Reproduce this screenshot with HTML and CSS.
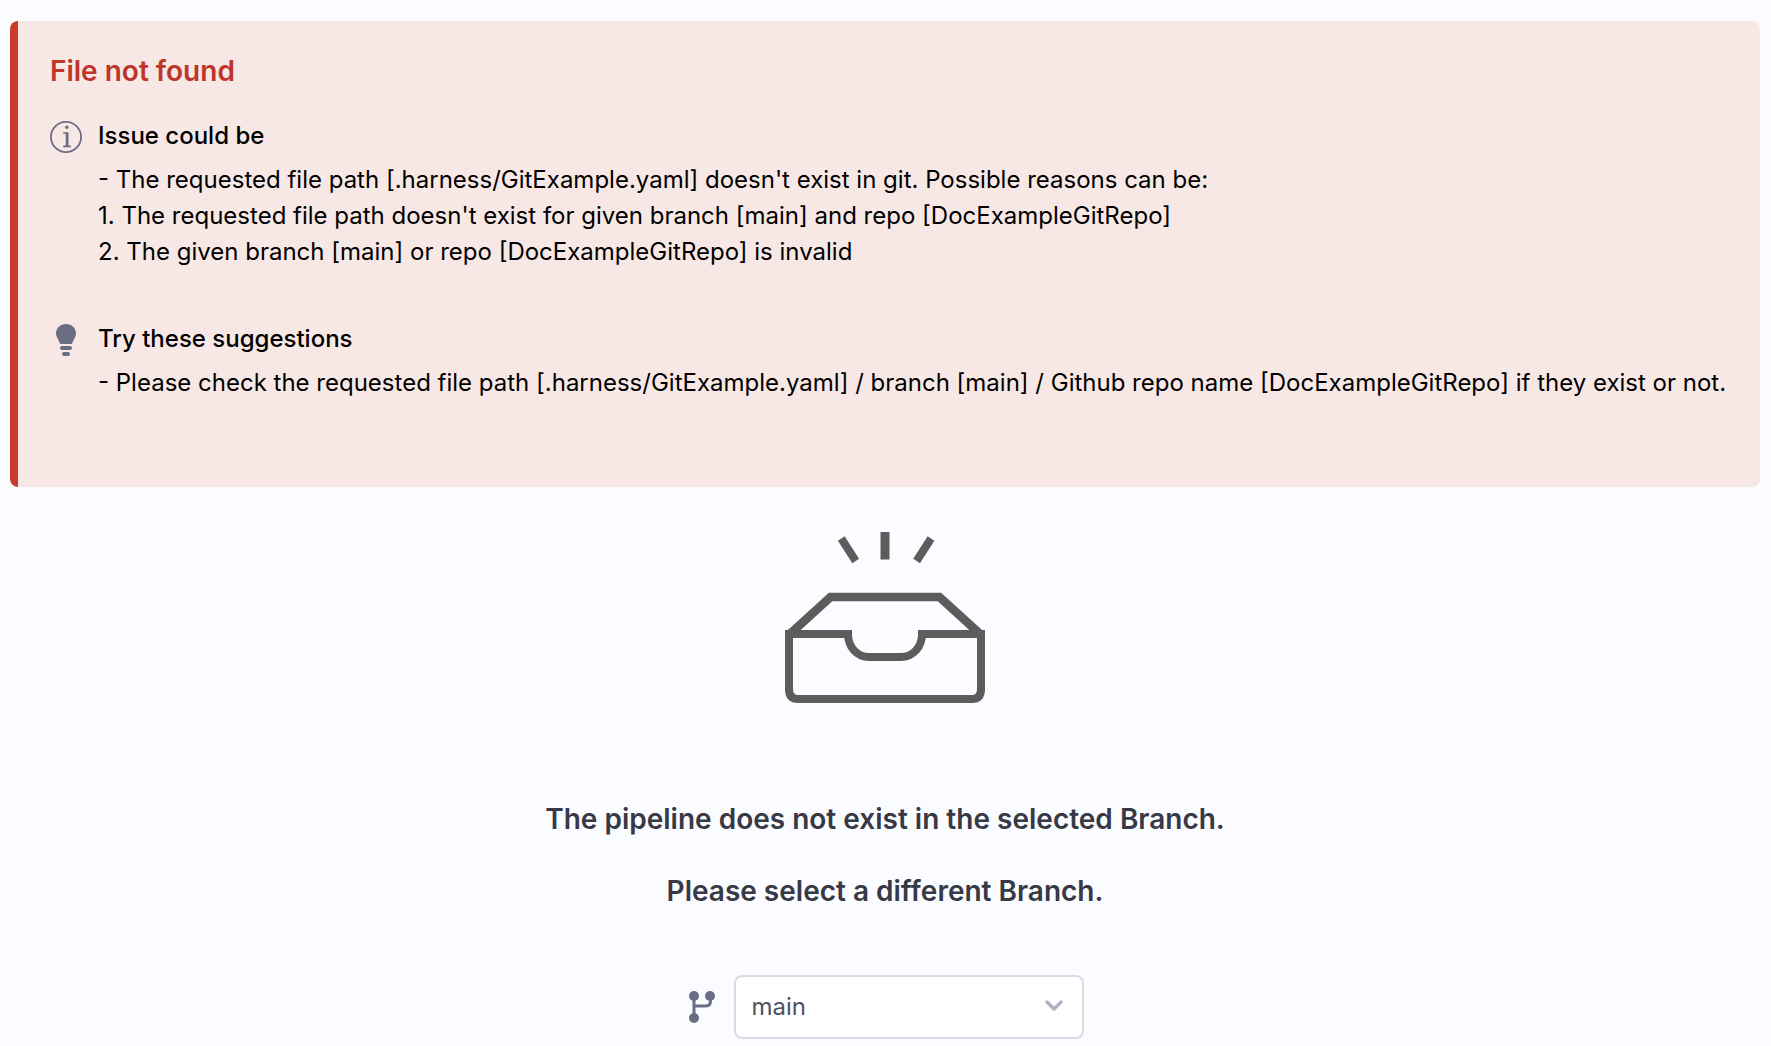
FILE: index.html
```html
<!DOCTYPE html>
<html lang="en">
<head>
<meta charset="utf-8">
<title>File not found</title>
<meta name="viewport" content="width=device-width, initial-scale=1">
<link rel="stylesheet" href="styles.css">
</head>
<body>
<section class="error" role="alert">
  <h1 class="error-title">File not found</h1>
  <div class="hint">
    <svg class="hint-icon" viewBox="0 0 32 32" aria-hidden="true">
      <circle cx="16" cy="16" r="15.1" fill="none" stroke="currentColor" stroke-width="1.8"/>
      <circle cx="16.8" cy="6.3" r="1.7" fill="currentColor"/>
      <path d="M13.2 11.2h5.300v13.400h2.300v1.600h-7.600v-1.600h2.500V12.800h-2.500z" fill="currentColor"/>
    </svg>
    <div class="hint-content">
      <h2 class="hint-title">Issue could be</h2>
      <p class="hint-text">- The requested file path [.harness/GitExample.yaml] doesn't exist in git. Possible reasons can be:<br>1. The requested file path doesn't exist for given branch [main] and repo [DocExampleGitRepo]<br>2. The given branch [main] or repo [DocExampleGitRepo] is invalid</p>
    </div>
  </div>
  <div class="hint">
    <svg class="hint-icon" viewBox="0 0 32 32" aria-hidden="true" fill="currentColor">
      <path d="M16 0C10.400 0 6 4.200 6 9.300c0 3.900 2.300 5.800 3.500 9.100.3.900.6 1.600 1.300 1.600h10.400c.7 0 1-.7 1.300-1.600C23.700 15.100 26 13.200 26 9.300 26 4.200 21.600 0 16 0z"/>
      <rect x="10" y="22" width="12" height="4" rx="2"/>
      <rect x="12" y="28" width="8" height="4" rx="2"/>
    </svg>
    <div class="hint-content">
      <h2 class="hint-title">Try these suggestions</h2>
      <p class="hint-text">- Please check the requested file path [.harness/GitExample.yaml] / branch [main] / Github repo name [DocExampleGitRepo] if they exist or not.</p>
    </div>
  </div>
</section>
<main class="empty">
  <svg class="tray" viewBox="0 0 200 172" aria-hidden="true" fill="none" stroke="currentColor">
    <path d="M100 0v27.500" stroke-width="9"/>
    <path d="M56.300 6.500 70.700 29M146 6.500 131.600 29" stroke-width="8"/>
    <path d="M6 101 45.500 65h109L194 101" stroke-width="8.500"/>
    <path d="M63 102H4v55q0 10 9 10h174q9 0 9-10v-55h-59c0 13-9 23-21 23H84c-12 0-21-10-21-23v-4" stroke-width="8"/>
    <path d="M137 98v4" stroke-width="8"/>
  </svg>
  <p class="empty-text">The pipeline does not exist in the selected Branch.</p>
  <p class="empty-text">Please select a different Branch.</p>
  <div class="branch">
    <svg class="branch-icon" viewBox="0 0 26 32" aria-hidden="true">
      <g fill="currentColor"><circle cx="5" cy="5" r="5"/><circle cx="21" cy="5" r="5"/><circle cx="5" cy="27" r="5"/></g>
      <path d="M5 5v22M5 15h11.500q5 0 5-5V5" fill="none" stroke="currentColor" stroke-width="3"/>
    </svg>
    <div class="select-box">
      <select class="select" aria-label="Branch"><option>main</option></select>
      <svg class="chevron" viewBox="0 0 18 11" aria-hidden="true"><path d="M2 2l7 7 7-7" fill="none" stroke="currentColor" stroke-width="3.400" stroke-linecap="round"/></svg>
    </div>
  </div>
</main>
</body>
</html>
```
FILE: styles.css
```css
* {
  box-sizing: border-box;
}

body {
  margin: 0;
  padding: 21px 11px 7px 10px;
  background: #fbfcff;
  color: #000;
  font-family: Inter, "Liberation Sans", sans-serif;
  font-size: 24px;
  line-height: 36px;
}

h1, h2, p {
  margin: 0;
}

.error {
  padding: 32px 28px 50px 32px;
  border-left: 8px solid #c93a2b;
  border-radius: 8px;
  background: #f7e8e5;
}

.error-title {
  margin-bottom: 29px;
  color: #c0352a;
  font-size: 28px;
  font-weight: 600;
}

.hint {
  display: flex;
  gap: 16px;
}

.hint + .hint {
  margin-top: 15px;
}

.hint-icon {
  flex: none;
  width: 32px;
  height: 38px;
  color: #6b6d85;
}

.hint-title {
  margin-bottom: 8px;
  font-size: 24px;
  font-weight: 500;
}

.hint-text {
  margin-bottom: 36px;
}

.empty {
  display: flex;
  flex-direction: column;
  align-items: center;
  padding-top: 45px;
}

.tray {
  width: 200px;
  height: 172px;
  margin-bottom: 97px;
  color: #5c5c5c;
}

.empty-text {
  margin-bottom: 36px;
  color: #383946;
  font-size: 28px;
  font-weight: 600;
}

.branch {
  display: flex;
  align-items: center;
  gap: 19px;
  margin-top: 30px;
  padding-left: 2px;
}

.branch-icon {
  width: 26px;
  height: 32px;
  color: #6b6d85;
}

.select-box {
  position: relative;
  width: 350px;
}

.select {
  display: block;
  width: 100%;
  height: 64px;
  padding: 0 48px 0 16px;
  border: 2px solid #d9dae5;
  border-radius: 8px;
  background: #fff;
  color: #4f5162;
  font: inherit;
  appearance: none;
}

.chevron {
  position: absolute;
  top: 25px;
  right: 21px;
  width: 18px;
  height: 11px;
  color: #b0b1c4;
  pointer-events: none;
}
```
